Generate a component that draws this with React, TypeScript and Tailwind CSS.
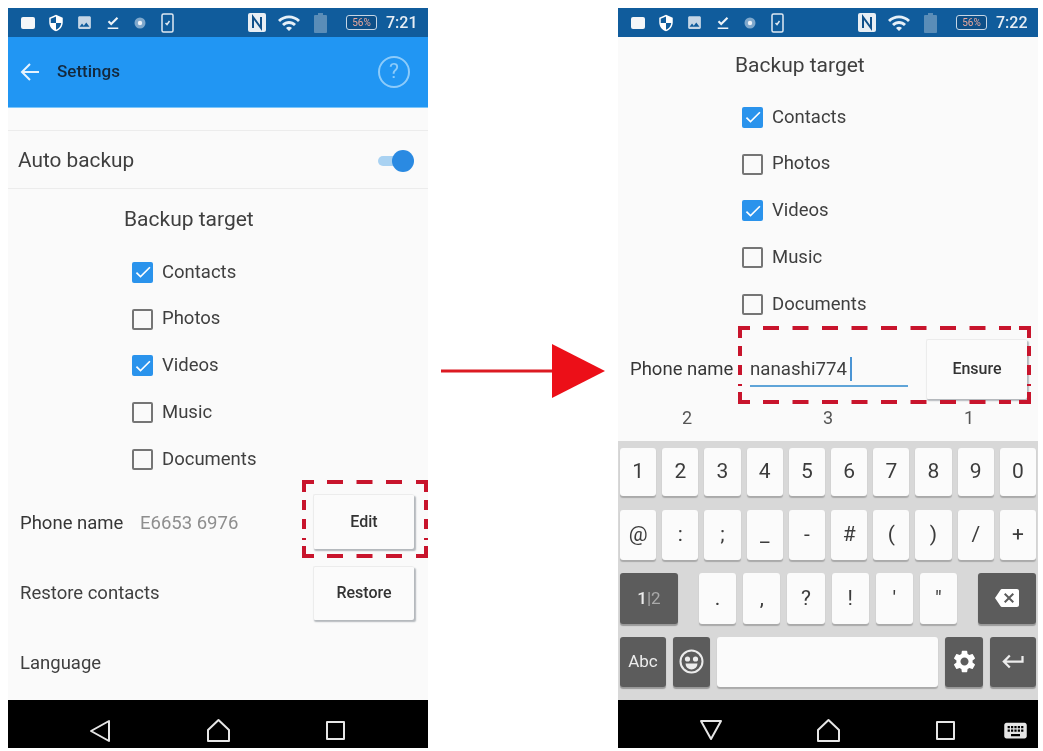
import React from "react";
import { MdSecurity, MdImage, MdFileDownloadDone, MdWifi, MdSettings, MdBackspace, MdKeyboardReturn, MdKeyboard, MdCheck } from "react-icons/md";

function StatusBar({ time }: { time: string }) {
  return (
    <div className="h-[29px] flex-none bg-[#105c9c] flex items-center pl-[13px] text-[#e8eef5]">
      <div className="w-[14px] h-[12px] rounded-[2px] bg-[#f4f6f8]" />
      <MdSecurity className="ml-[12px] w-[18px] h-[18px] text-white" />
      <MdImage className="ml-[11px] w-[17px] h-[17px] text-[#c5d6e6]" />
      <MdFileDownloadDone className="ml-[11px] w-[18px] h-[18px] text-[#eef3f8]" />
      <svg className="ml-[12px] w-[12px] h-[12px]" viewBox="0 0 12 12">
        <circle cx="6" cy="6" r="5.5" fill="#7fa8cc" />
        <circle cx="6" cy="6" r="2.2" fill="#eef3f8" />
      </svg>
      <svg className="ml-[15px] w-[13px] h-[20px]" viewBox="0 0 13 20" fill="none" stroke="#dfe9f2" strokeWidth="1.5">
        <rect x="1" y="1" width="11" height="18" rx="1.5" />
        <path d="M4.5 10l1.5 1.5L8.5 8" />
      </svg>
      <svg className="ml-[74px] w-[18px] h-[19px]" viewBox="0 0 18 19">
        <rect width="18" height="19" rx="2" fill="#e8eef4" />
        <path d="M5 15V4l8 11V4" fill="none" stroke="#10508a" strokeWidth="2" />
      </svg>
      <MdWifi className="ml-[11px] w-[24px] h-[24px] text-[#e6f0f8]" />
      <svg className="ml-[13px] w-[13px] h-[20px]" viewBox="0 0 13 20">
        <rect x="4" y="0" width="5" height="3" fill="#5a8db8" />
        <rect x="0" y="2" width="13" height="18" rx="1" fill="#5a8db8" />
      </svg>
      <div className="ml-[19px] w-[31px] h-[15px] border border-[#c5d6e6] rounded-[3px] bg-[#0d4f88] flex items-center justify-center text-[10px] leading-none text-[#e8a79c]">
        56%
      </div>
      <span className="ml-[9px] text-[16px] leading-none font-medium text-[#e8eef4]">{time}</span>
    </div>
  );
}

function NavBar({ kb }: { kb?: boolean }) {
  return (
    <div className="flex-none h-[48px] bg-black flex items-center pt-[13px]">
      <div className={`w-[116px] flex justify-end ${kb ? "pr-[11px]" : "pr-[13px]"}`}>
        {kb ? (
          <svg className="w-[24px] h-[22px]" viewBox="0 0 24 22" fill="none" stroke="#e6e6e6" strokeWidth="2" strokeLinejoin="round">
            <path d="M2 2h20L12 20z" />
          </svg>
        ) : (
          <svg className="w-[22px] h-[24px]" viewBox="0 0 22 24" fill="none" stroke="#e6e6e6" strokeWidth="2" strokeLinejoin="round">
            <path d="M20 2v20L2 12z" />
          </svg>
        )}
      </div>
      <svg className="ml-[82px] w-[25px] h-[25px]" viewBox="0 0 25 25" fill="none" stroke="#e6e6e6" strokeWidth="2" strokeLinejoin="round">
        <path d="M2 12L12.5 2 23 12v11H2z" />
      </svg>
      <div className="ml-[95px] w-[19px] h-[19px] border-2 border-[#e6e6e6] rounded-[1px]" />
      {kb && <MdKeyboard className="ml-[47px] w-[27px] h-[27px] text-[#e6e6e6]" />}
    </div>
  );
}

function CheckRow({ label, checked }: { label: string; checked?: boolean }) {
  return (
    <div className="h-[46.8px] flex items-center gap-[9px] text-[18.5px] text-[#3f3f3f]">
      {checked ? (
        <div className="w-[21px] h-[21px] bg-[#2a93ec] rounded-[2px] flex items-center justify-center">
          <MdCheck className="w-[20px] h-[20px] text-white" />
        </div>
      ) : (
        <div className="w-[21px] h-[21px] border-2 border-[#757575] rounded-[2px]" />
      )}
      <span>{label}</span>
    </div>
  );
}

function Targets({ marginClass }: { marginClass: string }) {
  return (
    <div className={marginClass}>
      <CheckRow label="Contacts" checked />
      <CheckRow label="Photos" />
      <CheckRow label="Videos" checked />
      <CheckRow label="Music" />
      <CheckRow label="Documents" />
    </div>
  );
}

function RaisedButton({ label, heightClass }: { label: string; heightClass: string }) {
  return (
    <div className={`w-[101px] ${heightClass} bg-[#fbfbfb] border-t border-l border-[#ececec] rounded-[2px] shadow-[1.5px_2px_1.5px_#b4b8bc] flex items-center justify-center text-[16px] font-medium text-[#333]`}>
      {label}
    </div>
  );
}

function Key({ children, className = "flex-1" }: { children?: React.ReactNode; className?: string }) {
  return (
    <div className={`${className} bg-[#fbfbfb] rounded-[3px] shadow-[0_1.5px_1px_#aaaaaa] flex items-center justify-center text-[21px] text-[#3c3c3c]`}>
      {children}
    </div>
  );
}

function DarkKey({ children, className }: { children?: React.ReactNode; className: string }) {
  return (
    <div className={`${className} bg-[#5c5c5c] rounded-[3px] shadow-[0_1.5px_1px_#999999] flex items-center justify-center text-[#ececec]`}>
      {children}
    </div>
  );
}

function Keyboard() {
  return (
    <div className="h-[259px] flex-none bg-[#d8d8d8] px-[2px] pt-[7px] flex flex-col">
      <div className="h-[48px] flex gap-[6px]">
        {["1", "2", "3", "4", "5", "6", "7", "8", "9", "0"].map((k) => (
          <Key key={k}>{k}</Key>
        ))}
      </div>
      <div className="h-[50px] mt-[14px] flex gap-[6px]">
        {["@", ":", ";", "_", "-", "#", "(", ")", "/", "+"].map((k) => (
          <Key key={k}>{k}</Key>
        ))}
      </div>
      <div className="h-[51px] mt-[13px] flex">
        <DarkKey className="w-[58px]">
          <span className="text-[17px] font-medium">1</span>
          <span className="text-[17px] text-[#aaa]">|2</span>
        </DarkKey>
        <div className="flex-1 px-[21px] flex gap-[7px]">
          {[".", ",", "?", "!", "'", '"'].map((k) => (
            <Key key={k}>{k}</Key>
          ))}
        </div>
        <DarkKey className="w-[58px]">
          <MdBackspace className="w-[24px] h-[24px] text-white" />
        </DarkKey>
      </div>
      <div className="h-[50px] mt-[13px] flex gap-[7px]">
        <DarkKey className="w-[46px] text-[17px]">Abc</DarkKey>
        <DarkKey className="w-[37px]">
          <svg className="w-[25px] h-[25px]" viewBox="0 0 25 25" fill="none" stroke="#ececec" strokeWidth="2">
            <circle cx="12.5" cy="12.5" r="11" />
            <circle cx="8.5" cy="10" r="1.6" fill="#ececec" />
            <circle cx="16.5" cy="10" r="1.6" fill="#ececec" />
            <path d="M6.5 14.5h12a6 6 0 0 1-12 0z" fill="#ececec" stroke="none" />
          </svg>
        </DarkKey>
        <Key className="flex-1" />
        <DarkKey className="w-[38px]">
          <MdSettings className="w-[27px] h-[27px] text-white" />
        </DarkKey>
        <DarkKey className="w-[46px]">
          <MdKeyboardReturn className="w-[27px] h-[27px] text-[#ececec]" />
        </DarkKey>
      </div>
    </div>
  );
}

function DashBox({ className, w, h }: { className: string; w: number; h: number }) {
  return (
    <svg className={`absolute ${className}`} width={w} height={h} viewBox={`0 0 ${w} ${h}`} fill="none" stroke="#c8142c" strokeWidth="4">
      <path d={`M2 12V2H12M${w - 12} 2H${w - 2}V12M${w - 2} ${h - 12}V${h - 2}H${w - 12}M12 ${h - 2}H2V${h - 12}`} />
      <path d={`M25 2H${w - 20}M25 ${h - 2}H${w - 20}`} strokeDasharray="16 13.5" />
      <path d={`M2 20V${h - 18}M${w - 2} 20V${h - 18}`} strokeDasharray="10 9" />
    </svg>
  );
}

export default function App() {
  return (
    <div className="w-[1043px] h-[751px] bg-white pt-[8px] pl-[8px] flex font-['Roboto',sans-serif] blur-[0.5px] overflow-hidden">
      <div className="relative w-[420px] h-[740px] flex flex-col bg-[#fafafa]">
        <StatusBar time="7:21" />
        <div className="h-[70px] flex-none bg-[#2196f3] flex items-center pl-[12px] pr-[18px] shadow-[0_1px_0_#7cc6fa]">
          <svg className="w-[20px] h-[20px]" viewBox="0 0 20 20" fill="none" stroke="#e6f3fe" strokeWidth="2">
            <path d="M19 10H2M10 2l-8 8 8 8" />
          </svg>
          <span className="ml-[17px] text-[17px] font-medium text-[#14283c]">Settings</span>
          <div className="ml-auto w-[32px] h-[32px] rounded-full border-2 border-[#8ccbfa] flex items-center justify-center text-[21px] text-[#8ccbfa]">
            ?
          </div>
        </div>
        <div className="h-[59px] flex-none mt-[23px] border-y border-[#ececec] flex items-center pl-[10px] pr-[14px] pt-[2px] text-[20.8px] text-[#3f3f3f]">
          <span>Auto backup</span>
          <div className="ml-auto relative w-[36px] h-[22px] flex items-center">
            <div className="w-[30px] h-[10px] rounded-full bg-[#a9d2f2]" />
            <div className="absolute right-0 w-[22px] h-[22px] rounded-full bg-[#2a8ae2]" />
          </div>
        </div>
        <div className="h-[60px] flex-none flex items-center pl-[116px] pt-[2px] text-[21px] text-[#3f3f3f]">Backup target</div>
        <Targets marginClass="ml-[124px]" />
        <div className="h-[55px] flex-none mt-[11px] flex items-center pl-[12px] text-[18.5px]">
          <span className="w-[120px] text-[#363636] pt-[5px]">Phone name</span>
          <span className="text-[#8e8e8e] pt-[5px]">E6653 6976</span>
          <div className="ml-auto mr-[14px]">
            <RaisedButton label="Edit" heightClass="h-[55px]" />
          </div>
        </div>
        <div className="h-[54px] flex-none mt-[17px] flex items-center pl-[12px] text-[18.5px] text-[#3f3f3f]">
          <span className="pt-[2px]">Restore contacts</span>
          <div className="ml-auto mr-[14px]">
            <RaisedButton label="Restore" heightClass="h-[54px]" />
          </div>
        </div>
        <div className="flex-1 flex items-center pl-[12px] pt-[8px] text-[18.5px] text-[#3f3f3f]">Language</div>
        <NavBar />
        <DashBox className="left-[294px] top-[472px]" w={126} h={78} />
      </div>

      <div className="w-[190px] h-[740px] flex items-center pl-[13px] pb-[14px]">
        <svg className="w-[164px] h-[54px]" viewBox="0 0 164 54">
          <rect x="0" y="25.5" width="115" height="3" fill="#dc1a22" />
          <path d="M111 0l53 27-53 27z" fill="#ec0f18" />
        </svg>
      </div>

      <div className="relative w-[420px] h-[740px] flex flex-col bg-[#fafafa]">
        <StatusBar time="7:22" />
        <div className="h-[57px] flex-none flex items-center pl-[117px] text-[21px] text-[#3f3f3f]">Backup target</div>
        <Targets marginClass="ml-[124px]" />
        <div className="h-[60px] flex-none mt-[11px] flex items-center pl-[12px] text-[18.5px] text-[#363636]">
          <span className="w-[120px] pt-[2px]">Phone name</span>
          <div className="w-[158px] h-[36px] border-b-2 border-[#5fa4d8] flex items-center text-[18.7px] text-[#3f3f3f] pt-[2px]">
            nanashi774
            <div className="ml-[3px] w-[2px] h-[24px] bg-[#4a94d4]" />
          </div>
          <div className="ml-[18px]">
            <RaisedButton label="Ensure" heightClass="h-[60px]" />
          </div>
        </div>
        <div className="h-[42px] flex-none flex pb-[4px] items-center text-[18px] text-[#555]">
          <div className="ml-[64px] w-[10px] text-center">2</div>
          <div className="ml-[131px] w-[10px] text-center">3</div>
          <div className="ml-[131px] w-[10px] text-center">1</div>
        </div>
        <Keyboard />
        <NavBar kb />
        <DashBox className="left-[120px] top-[318px]" w={293} h={78} />
      </div>
    </div>
  );
}
